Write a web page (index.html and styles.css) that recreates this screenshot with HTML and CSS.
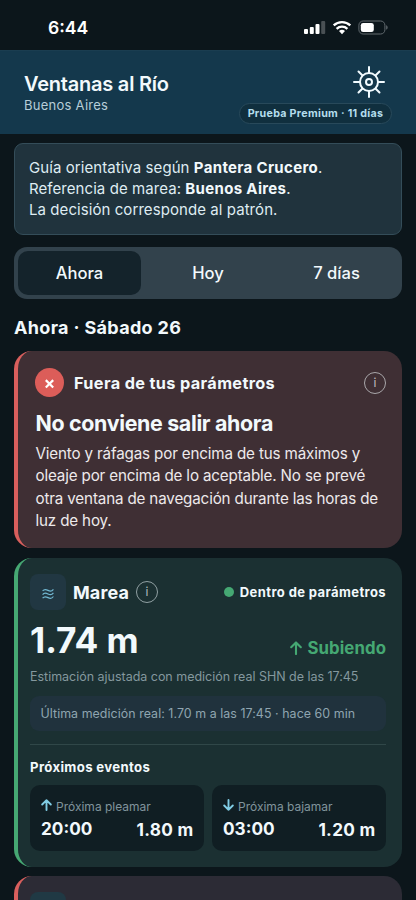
FILE: index.html
```html
<!DOCTYPE html>
<html lang="es">
<head>
<meta charset="utf-8">
<meta name="viewport" content="width=device-width, initial-scale=1">
<title>Ventanas al Río</title>
<link rel="stylesheet" href="styles.css">
</head>
<body>
<div class="status">
  <span class="clock">6:44</span>
  <svg class="status-icons" width="86" height="16" viewBox="0 0 86 16">
    <g fill="#fff">
      <rect x="0" y="9" width="4" height="5" rx="1"/>
      <rect x="5.8" y="7" width="4" height="7" rx="1"/>
      <rect x="11.5" y="4" width="4" height="10" rx="1"/>
      <rect x="17.2" y="1" width="4" height="13" rx="1" opacity=".25"/>
      <path d="M38 14.2l-3-3.1a4.4 4.4 0 0 1 6 0z"/>
    </g>
    <g fill="none" stroke="#fff" stroke-width="2.3">
      <path d="M32.6 8.8a7.8 7.8 0 0 1 10.8 0"/>
      <path d="M29.7 5.4a12 12 0 0 1 16.6 0"/>
    </g>
    <rect x="54.9" y="1" width="26" height="13" rx="4.2" fill="none" stroke="#626a6f"/>
    <rect x="56.8" y="2.9" width="13" height="9.2" rx="2.4" fill="#fff"/>
    <path d="M82.2 5.3c1.9.7 1.9 3.7 0 4.4z" fill="#626a6f"/>
  </svg>
</div>
<header class="header">
  <div>
    <h1 class="app-title">Ventanas al Río</h1>
    <div class="app-place">Buenos Aires</div>
  </div>
  <div class="header-side">
    <svg class="helm" width="34" height="34" viewBox="-17 -17 34 34" fill="none" stroke="#f2fbff" stroke-width="2" stroke-linecap="round">
      <circle r="9"/>
      <circle r="3"/>
      <path d="M0-9.5V-15M0 9.5V15M-9.5 0H-15M9.5 0H15M-6.7-6.7L-10.5-10.5M6.7-6.7L10.5-10.5M-6.7 6.7L-10.5 10.5M6.7 6.7L10.5 10.5"/>
    </svg>
    <span class="trial">Prueba Premium · 11 días</span>
  </div>
</header>
<main class="main">
  <section class="notice">
    <p>Guía orientativa según <b>Pantera Crucero</b>.</p>
    <p>Referencia de marea: <b>Buenos Aires</b>.</p>
    <p>La decisión corresponde al patrón.</p>
  </section>
  <nav class="tabs">
    <span class="tab active">Ahora</span>
    <span class="tab">Hoy</span>
    <span class="tab">7 días</span>
  </nav>
  <h2 class="day">Ahora · Sábado 26</h2>
  <section class="card alert">
    <div class="alert-head">
      <svg width="29" height="29" viewBox="0 0 29 29"><circle cx="14.5" cy="14.5" r="14.5" fill="#dc5d59"/><path d="M10.8 12.1l7.4 7.4M18.2 12.1l-7.4 7.4" stroke="#fff" stroke-width="2.2"/></svg>
      <strong class="alert-label">Fuera de tus parámetros</strong>
      <span class="info">i</span>
    </div>
    <h3 class="alert-title">No conviene salir ahora</h3>
    <p class="alert-text">Viento y ráfagas por encima de tus máximos y<br>oleaje por encima de lo aceptable. No se prevé<br>otra ventana de navegación durante las horas de<br>luz de hoy.</p>
  </section>
  <section class="card tide">
    <div class="tide-head">
      <span class="tile"><svg width="12" height="12" viewBox="0 0 12 12" fill="none" stroke="#72b8d2" stroke-width="1.2"><path d="M.6 3C2.4.7 4.3 1.500 6 2.400S9.700 3.700 11.400 1.300M.6 6.600C2.400 4.300 4.300 5.100 6 6s3.700 1.300 5.400-1.100M.6 10.200C2.400 7.900 4.300 8.700 6 9.600s3.700 1.300 5.400-1.100"/></svg></span>
      <h3 class="tide-title">Marea</h3>
      <span class="info">i</span>
      <span class="ok"><i class="dot"></i><b>Dentro de parámetros</b></span>
    </div>
    <div class="tide-row">
      <span class="level">1.74 m</span>
      <span class="trend"><svg width="12" height="14" viewBox="0 0 12 14" fill="none" stroke="#45a873" stroke-width="2.100" stroke-linecap="round" stroke-linejoin="round"><path d="M6 13V1.500M1.200 6.200L6 1.400l4.800 4.800"/></svg><span>Subiendo</span></span>
    </div>
    <p class="estimate">Estimación ajustada con medición real SHN de las 17:45</p>
    <p class="reading">Última medición real: 1.70 m a las 17:45 · hace 60 min</p>
    <div class="events">
      <h4 class="events-title">Próximos eventos</h4>
      <div class="event-grid">
        <div class="event">
          <div class="event-name"><svg width="11" height="12" viewBox="0 0 11 12" fill="none" stroke="#80cde5" stroke-width="1.900" stroke-linecap="round" stroke-linejoin="round"><path d="M5.500 11V1.300M1.200 5.500l4.300-4.300 4.300 4.300"/></svg><span>Próxima pleamar</span></div>
          <div class="event-data"><span>20:00</span><span class="height">1.80 m</span></div>
        </div>
        <div class="event">
          <div class="event-name"><svg width="11" height="12" viewBox="0 0 11 12" fill="none" stroke="#80cde5" stroke-width="1.900" stroke-linecap="round" stroke-linejoin="round"><path d="M5.500 1v9.700M1.200 6.500l4.300 4.300 4.300-4.300"/></svg><span>Próxima bajamar</span></div>
          <div class="event-data"><span>03:00</span><span class="height">1.20 m</span></div>
        </div>
      </div>
    </div>
  </section>
  <section class="card next"><span class="next-tile"></span></section>
</main>
</body>
</html>
```
FILE: styles.css
```css
* { box-sizing: border-box; margin: 0; padding: 0; }
html, body { height: 900px; overflow: hidden; }
body {
  background: #0c161b;
  color: #f2f9fc;
  font-family: Inter, "Liberation Sans", sans-serif;
  display: flex;
  flex-direction: column;
}
svg { display: block; flex: none; }
p, span, h1, h2, h3, h4, strong { white-space: nowrap; }
b { font-weight: 700; }

.status {
  flex: none;
  height: 50px;
  padding: 18px 27px 0 48px;
  display: flex;
  justify-content: space-between;
  align-items: flex-start;
}
.clock { font-size: 17.6px; line-height: 20px; font-weight: 600; color: #fff; }
.status-icons { margin: 2px -1px 0 0; }

.header {
  flex: none;
  height: 84px;
  background: #14384c;
  border-top: 1px solid #1a3d50;
  padding: 14px 24px 0;
  display: flex;
  justify-content: space-between;
}
.app-title { font-size: 20px; line-height: 24px; font-weight: 600; letter-spacing: -.22px; margin-top: 7px; }
.app-place { font-size: 13px; line-height: 18px; color: #b7ced9; letter-spacing: .26px; }
.header-side { display: flex; flex-direction: column; align-items: flex-end; }
.helm { margin: 0 6px 4px 0; }
.trial {
  width: 153px;
  height: 21px;
  border: 1px solid #28495a;
  border-radius: 11px;
  background: #102f3e;
  color: #b4ddec;
  font-size: 10.7px;
  line-height: 19px;
  font-weight: 700;
  letter-spacing: .3px;
  text-align: center;
}

.main { padding: 9px 14px 0; display: flex; flex-direction: column; }
.notice {
  height: 92px;
  border: 1px solid #344d59;
  border-radius: 9px;
  background: #20333d;
  padding: 12.5px 14px;
  color: #dfecf2;
  font-size: 15px;
  line-height: 21.4px;
  letter-spacing: .07px;
}
.notice b { color: #f2f9fc; letter-spacing: .33px; }
.tabs {
  margin-top: 12px;
  height: 52px;
  border-radius: 13px;
  background: #32424c;
  padding: 4px;
  display: grid;
  grid-template-columns: 123px 1fr 123px;
  gap: 5px;
}
.tab { display: flex; align-items: center; justify-content: center; font-size: 16.6px; font-weight: 500; border-radius: 10px; }
.tab.active { background: #14232b; }
.day { margin-top: 17px; font-size: 18px; line-height: 24px; font-weight: 700; letter-spacing: .33px; }

.card { border-radius: 18px; border-left: 4px solid; }
.alert { margin-top: 11px; height: 197px; background: #3f2f34; border-color: #d95f5d; padding: 17px 16px 0 17.5px; }
.alert-head { display: flex; align-items: center; height: 29px; }
.alert-head svg { margin-left: -.5px; }
.alert-label { margin-left: 10px; font-size: 16.3px; font-weight: 700; letter-spacing: .35px; }
.info {
  width: 22px;
  height: 22px;
  border: 1px solid #a9a7aa;
  border-radius: 50%;
  color: #c1bfc2;
  font-size: 12px;
  line-height: 19px;
  text-align: center;
}
.alert .info { margin-left: auto; }
.alert-title { margin-top: 12px; font-size: 21.4px; line-height: 28px; font-weight: 700; letter-spacing: -.33px; }
.alert-text { margin-top: 6px; font-size: 15.2px; line-height: 22.3px; letter-spacing: -.16px; color: #ede9eb; }

.tide { margin-top: 10px; height: 309px; background: #1b3032; border-color: #46a873; padding: 16px 16px 0 12px; }
.tide-head { display: flex; align-items: center; height: 36px; }
.tile { width: 36px; height: 36px; border-radius: 8px; background: #213742; display: grid; place-items: center; }
.tile svg { margin-top: 3px; }
.tide-title { margin-left: 7px; font-size: 18px; font-weight: 700; letter-spacing: .1px; }
.tide .info { margin-left: 7px; border-color: #91a0a3; color: #b1bec0; }
.ok { margin-left: auto; display: flex; align-items: center; gap: 6px; font-size: 13px; letter-spacing: .4px; }
.dot { width: 10px; height: 10px; border-radius: 50%; background: #45a873; }
.tide-row { height: 54px; display: flex; justify-content: space-between; }
.level { font-size: 35.2px; line-height: 42px; margin-top: 9px; font-weight: 700; }
.trend { display: flex; align-items: center; gap: 5px; height: 24px; margin-top: 26px; color: #45a873; font-size: 16.8px; font-weight: 700; letter-spacing: .08px; }
.estimate { margin-top: 3px; font-size: 12.5px; line-height: 20px; letter-spacing: -.02px; color: #84989e; }
.reading {
  margin-top: 9px;
  height: 35px;
  border-radius: 9px;
  background: #20323d;
  padding-left: 10.5px;
  font-size: 12.4px;
  line-height: 35px;
  letter-spacing: .06px;
  color: #8fa5b0;
}
.events { margin-top: 13px; border-top: 1px solid #304748; }
.events-title { margin-top: 12px; font-size: 13.2px; line-height: 20px; font-weight: 700; letter-spacing: .34px; }
.event-grid { margin-top: 8px; display: grid; grid-template-columns: 1fr 1fr; gap: 8px; }
.event { height: 66px; border-radius: 10px; background: #101e23; padding: 14px 10.5px 0 11px; }
.event-name { display: flex; gap: 4px; height: 16px; line-height: 15px; font-size: 12px; color: #80949c; }
.event-data { display: flex; justify-content: space-between; font-size: 17.2px; line-height: 24px; font-weight: 700; margin-top: 2px; }
.height { margin-top: 1px; letter-spacing: .3px; }

.next { margin-top: 9px; height: 24px; border-radius: 18px 18px 0 0; background: #2c2b35; border-color: #d95f5d; padding: 16px 12px 0; }
.next-tile { display: block; width: 36px; height: 8px; border-radius: 8px 8px 0 0; background: #203944; }
```
